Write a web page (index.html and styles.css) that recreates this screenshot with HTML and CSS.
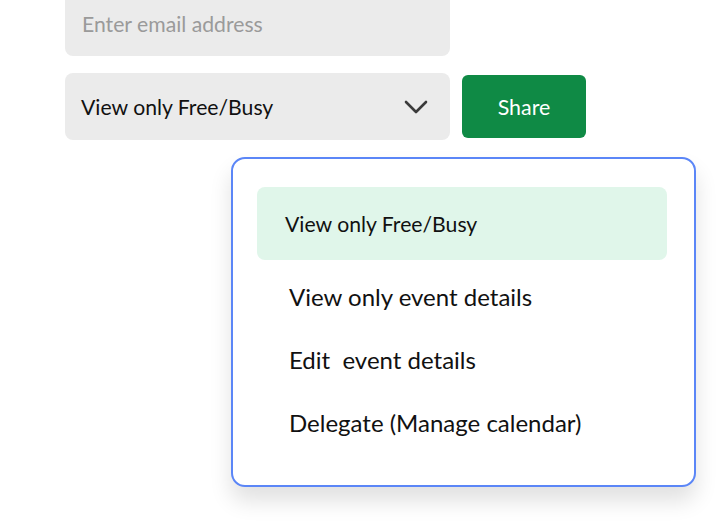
FILE: index.html
```html
<!DOCTYPE html>
<html lang="en">
<head>
  <meta charset="UTF-8">
  <title>Share calendar</title>
  <link rel="stylesheet" href="styles.css">
</head>
<body>
  <div class="share-form">
    <input type="text" class="email" placeholder="Enter email address">
    <div class="row">
      <div class="select">
        <span>View only Free/Busy</span>
        <svg class="chevron" width="24" height="16" viewBox="0 0 24 16">
          <path d="M2 3 L12 13 L22 3" fill="none" stroke="#3a3a3a" stroke-width="2.6" stroke-linecap="round" stroke-linejoin="round"/>
        </svg>
      </div>
      <button class="share">Share</button>
    </div>

    <ul class="menu">
      <li class="option active">View only Free/Busy</li>
      <li class="option">View only event details</li>
      <li class="option">Edit&nbsp; event details</li>
      <li class="option">Delegate (Manage calendar)</li>
    </ul>
  </div>
</body>
</html>
```

FILE: styles.css
```css
html, body {
  min-height: 100%;
}

body {
  margin: 0;
  min-height: 525px;
  background: #fff;
  font-family: Lato, "Noto Sans", sans-serif;
  color: #111;
}

.share-form {
  padding: 0 0 40px 65px;
  transform: translateY(-8px);
}

.email {
  display: block;
  box-sizing: border-box;
  width: 385px;
  height: 64px;
  border: none;
  border-radius: 8px;
  background: #ebebeb;
  padding: 0 17px;
  font-family: inherit;
  font-size: 21.2px;
  color: #111;
}

.email::placeholder {
  color: #9a9a9a;
}

.row {
  display: flex;
  align-items: center;
  gap: 12px;
  margin-top: 17px;
}

.select {
  box-sizing: border-box;
  width: 385px;
  height: 67px;
  display: flex;
  align-items: center;
  justify-content: space-between;
  padding: 0 22px 0 16px;
  border-radius: 8px;
  background: #ebebeb;
  font-size: 21.2px;
}

.chevron {
  margin-top: 1px;
}

.share {
  width: 124px;
  height: 63px;
  border: none;
  border-radius: 6px;
  background: #0f8a45;
  color: #fff;
  font-family: inherit;
  font-size: 21.4px;
  cursor: pointer;
}

.menu {
  box-sizing: border-box;
  width: 465px;
  height: 330px;
  margin: 17px 0 0 166px;
  padding: 28px 27px 0 24px;
  list-style: none;
  background: #fff;
  border: 2px solid #5b86f7;
  border-radius: 14px;
  box-shadow: 0 14px 22px rgba(0, 0, 0, 0.12);
}

.option {
  height: 63px;
  display: flex;
  align-items: center;
  padding-left: 32px;
  font-size: 24px;
}

.option.active {
  height: 73px;
  margin-bottom: 5px;
  padding-left: 28px;
  border-radius: 8px;
  background: #e0f6ea;
  font-size: 21.2px;
}
```
